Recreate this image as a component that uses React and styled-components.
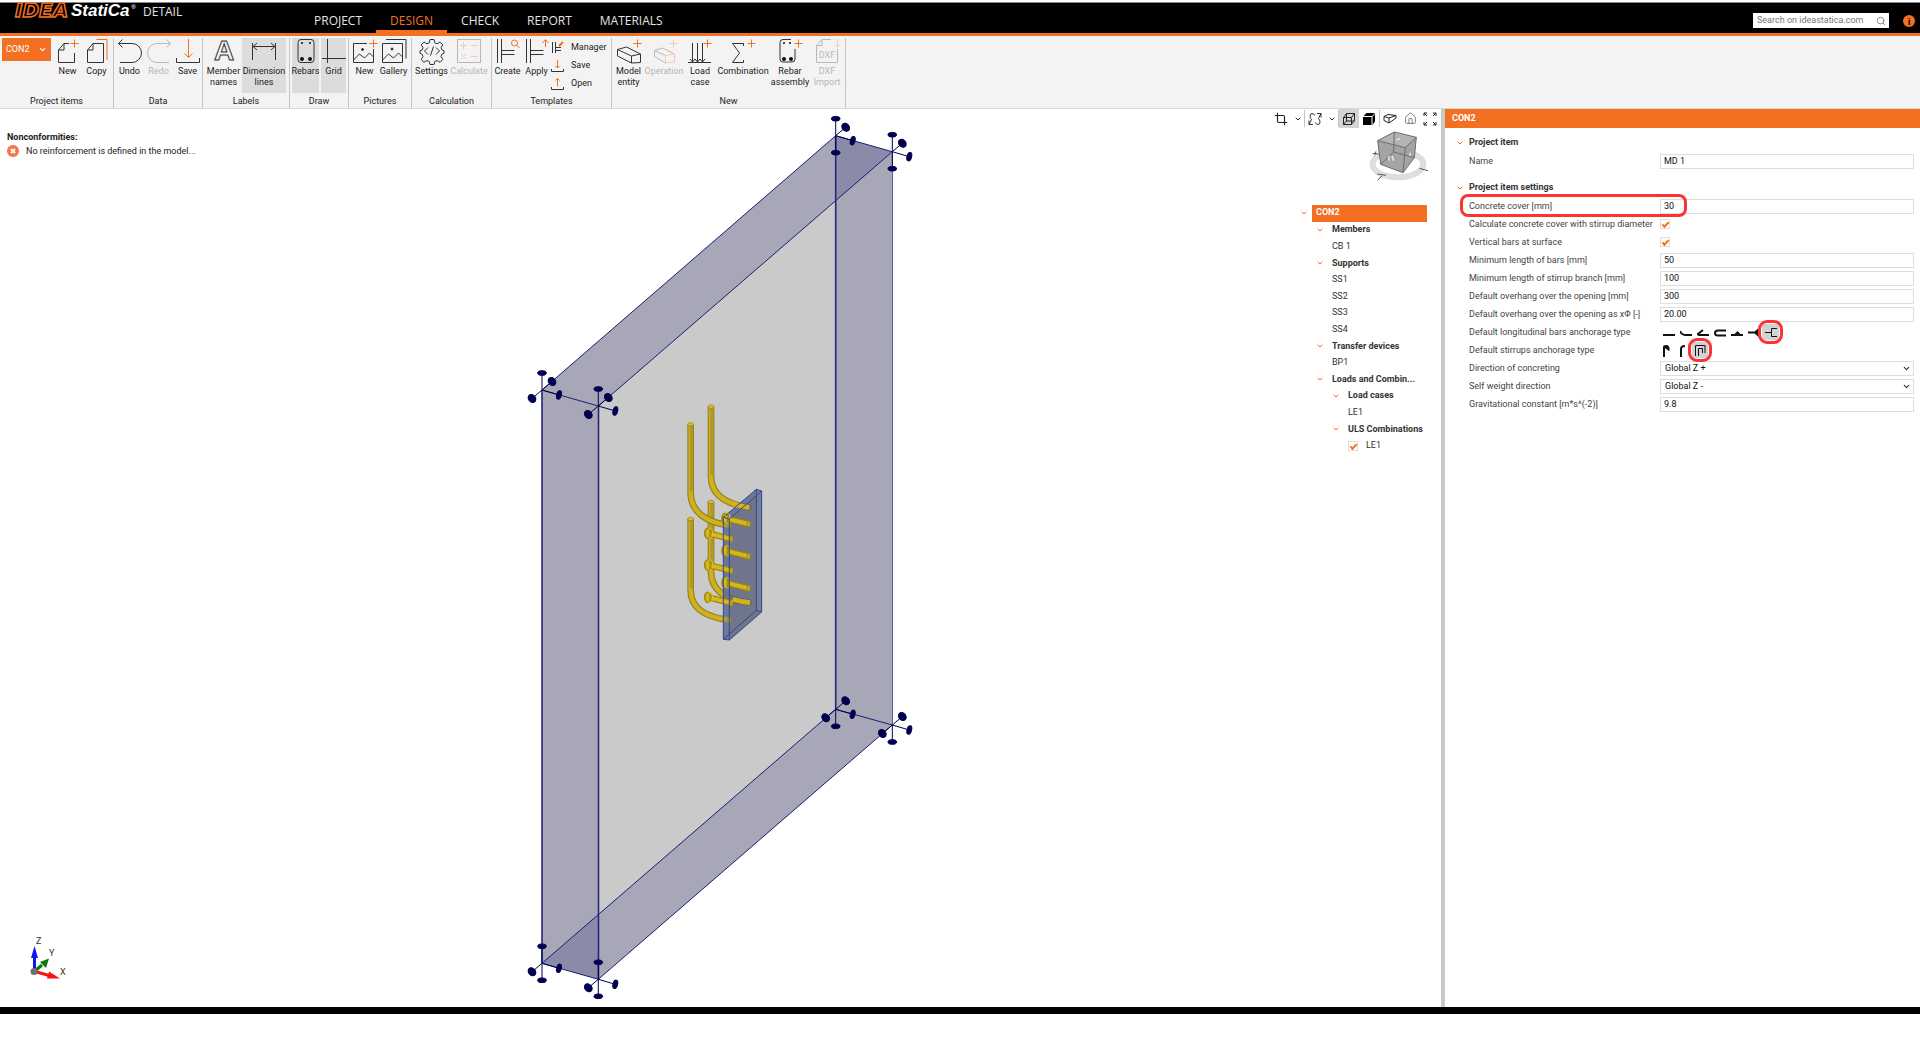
import React from "react";
import styled, { createGlobalStyle } from "styled-components";
import { ChevronDown, Search, Crop, House } from "lucide-react";

const ORANGE = "#f36f21";
const NAVY = "#00004f";

const GlobalStyle = createGlobalStyle`
  *,
  *::after {
    box-sizing: border-box;
  }
  body {
    margin: 0;
    background: #fff;
    color: #222;
    font-family: Roboto, "Open Sans", sans-serif;
    font-size: 9px;
    line-height: 11px;
  }
  button, input, select {
    margin: 0;
    padding: 0;
    border: 0;
    background: none;
    color: inherit;
    font: inherit;
  }
  svg {
    display: block;
    flex: none;
  }
`;

const Page = styled.div`
  display: flex;
  flex-direction: column;
  min-height: 100vh;
  padding: 2px 0 28px;
`;

/* ---------- title bar ---------- */

const TitleBar = styled.header`
  display: flex;
  align-items: stretch;
  height: 34px;
  border-top: 1px solid #8a8a8a;
  border-bottom: 3px solid ${ORANGE};
  background: #000;
  color: #e4e4e4;
  font-family: "Open Sans", "Noto Sans", sans-serif;
`;

const Brand = styled.div`
  display: flex;
  align-items: flex-start;
  width: 300px;
`;

const Product = styled.span`
  padding-top: 1px;
  margin-left: 9px;
  font-size: 12px;
  line-height: 16px;
`;

const Tabs = styled.nav`
  display: flex;
  flex: 1;
`;

const Tab = styled.a`
  padding: 9px 14px 0;
  border-bottom: 3px solid ${(p) => (p.$active ? ORANGE : "transparent")};
  color: ${(p) => (p.$active ? ORANGE : "#e4e4e4")};
  font-size: 12px;
  line-height: 17px;
  text-decoration: none;
`;

const SearchBox = styled.label`
  display: flex;
  align-items: center;
  align-self: flex-start;
  width: 136px;
  height: 15px;
  margin: 10px 14px 0 0;
  padding: 0 3px 0 4px;
  background: #fff;
  color: #777;
  font-family: Roboto, sans-serif;
  input {
    flex: 1;
    min-width: 0;
    outline: 0;
  }
  input::placeholder {
    color: #777;
    opacity: 1;
  }
`;

const InfoButton = styled.button`
  align-self: flex-start;
  width: 12px;
  height: 12px;
  margin: 12px 5px 0 0;
  border-radius: 50%;
  background: ${ORANGE};
  color: #000;
  font-weight: 700;
`;

/* ---------- ribbon ---------- */

const Ribbon = styled.div`
  display: flex;
  height: 73px;
  border-bottom: 1px solid #d8d8d8;
  background: #f3f3f3;
`;

const Group = styled.section`
  display: flex;
  flex-direction: column;
  justify-content: space-between;
  width: ${(p) => p.$width}px;
  margin-top: 2px;
  border-right: 1px solid #c4c4c4;
`;

const GroupTools = styled.div`
  display: flex;
  padding-left: ${(p) => (p.$inset ? 2 : 1)}px;
  gap: ${(p) => p.$gap || 0}px;
`;

const GroupName = styled.div`
  height: 12px;
  text-align: center;
`;

const Tool = styled.button`
  display: flex;
  flex-direction: column;
  align-items: center;
  width: ${(p) => p.$width || 29}px;
  height: 55px;
  padding-top: 1px;
  background: ${(p) => (p.$pressed ? "#dcdcdc" : "transparent")};
  opacity: ${(p) => (p.disabled ? 0.3 : 1)};
  span {
    margin-top: 3px;
    line-height: 11px;
  }
`;

const ProjectButton = styled.button`
  display: flex;
  align-items: center;
  justify-content: space-between;
  width: 49px;
  height: 23px;
  margin-right: 2px;
  padding: 0 4px;
  background: ${ORANGE};
  color: #fff;
`;

const SmallTools = styled.div`
  display: flex;
  flex-direction: column;
`;

const SmallTool = styled.button`
  display: flex;
  align-items: center;
  gap: 7px;
  height: 18px;
`;

const Icon = ({ size = 24, children }) => (
  <svg
    width={size}
    height={size}
    viewBox={`0 0 ${size} ${size}`}
    fill="none"
    stroke="#333"
    overflow="visible"
    aria-hidden="true"
  >
    {children}
  </svg>
);

const Plus = ({ x = 19.5, y = 4.5 }) => (
  <path d={`M${x - 4} ${y}h8M${x} ${y - 4}v8`} stroke={ORANGE} />
);

const icons = {
  newDoc: (
    <Icon>
      <path d="M13 4.5H8L2.5 11v12.5h16V14M8 4.5V11H2.5" />
      <Plus x={18.5} />
    </Icon>
  ),
  copy: (
    <Icon>
      <path d="M11.5.5H22V21" stroke={ORANGE} />
      <path d="M8 4.5h10.500v19h-16V11L8 4.500V11H2.500" />
    </Icon>
  ),
  undo: (
    <Icon>
      <path d="M.5 4.500H14a9.500 9.500 0 0 1 0 19H2M4.500.5l-4 4 4 4" />
    </Icon>
  ),
  redo: (
    <Icon>
      <path d="M23.500 4.500H10a9.500 9.500 0 0 0 0 19h12M19.500.5l4 4-4 4" />
    </Icon>
  ),
  save: (
    <Icon>
      <path d="M12.500 0v18.500M8.500 14.500l4 4 4-4" stroke={ORANGE} />
      <path d="M.5 19v4.500h23V19" />
    </Icon>
  ),
  names: (
    <Icon>
      <text
        x="12"
        y="21"
        textAnchor="middle"
        fontFamily="Liberation Sans, sans-serif"
        fontSize="28"
        fontWeight="700"
        strokeWidth="1"
      >
        A
      </text>
    </Icon>
  ),
  dimension: (
    <Icon>
      <path d="M.5 4v17M23.500 4v17M1 7.500h22M5 4L1 7.500 5 11M19 4l4 3.500-4 3.500" />
    </Icon>
  ),
  rebars: (
    <Icon>
      <rect x="4" y=".5" width="16" height="23" rx="3" />
      <g fill="#111" stroke="none">
        <circle cx="8" cy="4" r="1" />
        <circle cx="16" cy="4" r="1" />
        <circle cx="8" cy="20" r="2" />
        <circle cx="16" cy="20" r="2" />
      </g>
    </Icon>
  ),
  grid: (
    <Icon>
      <path d="M5.500 0v24M0 19.500h24" />
    </Icon>
  ),
  newPicture: (
    <Icon>
      <path d="M14 4.500H.5v19h20V10M.5 21l6-6 5 4 5-5 4 4" />
      <circle cx="9.500" cy="10.500" r="1" fill="#111" />
      <Plus x={20.5} />
    </Icon>
  ),
  gallery: (
    <Icon>
      <path d="M4 .5h20v19M.5 4.500h20v19H.5zM.5 21l6-6 5 4 5-5 4 4" />
      <circle cx="10" cy="10" r="1" fill="#111" />
    </Icon>
  ),
  settings: (
    <Icon>
      <path d="M10 .5h4l.8 3.300 2.200 1 3-1.800 2.800 2.800-1.700 3 .9 2.200 2 .8v2.500l-2.200 1-.8 2.200 1.800 3-2.800 2.800-3-1.800-2.200 1-.8 3h-4l-.8-3-2.200-1-3 1.800-2.800-2.800 1.800-3-1-2.200-2-1v-2.500l2.200-.8.800-2.200-1.800-3L4 3l3 1.800 2.200-1z" />
      <path d="M8 8.500L4.500 12 8 15.500M16 8.500l3.500 3.500-3.500 3.500M13.500 7.500l-3 9" />
    </Icon>
  ),
  calculate: (
    <Icon>
      <rect x=".5" y=".5" width="23" height="23" />
      <path
        d="M3 6.500h7M6.500 3v7M14 6.500h7M4 15l5 5M9 15l-5 5M14 17.500h7M17.500 14v1M17.500 20v1"
        stroke={ORANGE}
      />
    </Icon>
  ),
  create: (
    <Icon>
      <path d="M1.500 0v24M5.500 0v24M5.500 11.500h13M5.500 15.500h13" />
      <path d="M23.500 9l-3-3" stroke={ORANGE} />
      <circle cx="18.500" cy="4" r="3" stroke={ORANGE} />
    </Icon>
  ),
  apply: (
    <Icon>
      <path d="M1.500 0v24M5.500 0v24M5.500 11.500h13M5.500 15.500h13" />
      <path d="M20.500 8V1M17.500 4l3-3.500 3 3.500" stroke={ORANGE} />
    </Icon>
  ),
  manager: (
    <Icon size={13}>
      <path d="M1.500 1v11M4.500 1v11M4.500 6.500H10M4.500 9.500H10" />
      <path d="M8 5l4-4" stroke={ORANGE} strokeWidth="2" />
    </Icon>
  ),
  smallSave: (
    <Icon size={13}>
      <path d="M6.500 1v8M4.500 7l2 2 2-2" stroke={ORANGE} />
      <path d="M.5 10v2.500h12V10" />
    </Icon>
  ),
  smallOpen: (
    <Icon size={13}>
      <path d="M6.500 9.500v-8M4.500 3.500l2-2 2 2" stroke={ORANGE} />
      <path d="M.5 10v2.500h12V10" />
    </Icon>
  ),
  entity: (
    <Icon>
      <path d="M.5 10.500L9.500 8l14 7v8.500l-9 .500-14-7zM.5 10.500l14 6.500 9-2M14.500 17v7" />
      <Plus x={20.5} />
    </Icon>
  ),
  operation: (
    <Icon>
      <path d="M2.500 11.500l8-2.500 12 6M2.500 11.500v6l11 6.500M2.500 11.500l11 5" />
      <path d="M13.500 16.500l9-1.500v8l-9 1z" stroke={ORANGE} />
      <Plus x={21.5} />
    </Icon>
  ),
  loadCase: (
    <Icon>
      <path d="M4.500 4v19M9.500 4v19M14.500 4v19M0 23.500h23M2 20l2.500 3 2.500-3 2.500 3 2.500-3 2.500 3 2.500-3" />
      <Plus x={19.5} />
    </Icon>
  ),
  combination: (
    <Icon>
      <path d="M12.500 7V4.500H1.500l7 9.500-7 9.500h11V21" />
      <Plus x={20.5} />
    </Icon>
  ),
  assembly: (
    <Icon>
      <path d="M13 .5H5a3 3 0 0 0-3 3V20a3 3 0 0 0 3 3h9a3 3 0 0 0 3-3V10" />
      <g fill="#111" stroke="none">
        <circle cx="6" cy="4" r="1" />
        <circle cx="12" cy="4" r="1" />
        <circle cx="6" cy="20" r="2" />
        <circle cx="13" cy="20" r="2" />
      </g>
      <Plus x={20.5} />
    </Icon>
  ),
  dxf: (
    <Icon>
      <path d="M16 .5H7l-5.500 6v17h21V10M7 .5v6H1.500" />
      <path d="M22.500 0v8M20 5.500L22.500 8 25 5.500" stroke={ORANGE} />
      <text x="12" y="19" textAnchor="middle" fontSize="9" fill="#333" stroke="none">
        DXF
      </text>
    </Icon>
  ),
};

const ribbonGroups = [
  {
    name: "Project items",
    width: 114,
    inset: true,
    project: true,
    tools: [
      { label: "New", icon: "newDoc" },
      { label: "Copy", icon: "copy" },
    ],
  },
  {
    name: "Data",
    width: 89,
    tools: [
      { label: "Undo", icon: "undo" },
      { label: "Redo", icon: "redo", disabled: true },
      { label: "Save", icon: "save" },
    ],
  },
  {
    name: "Labels",
    width: 87,
    inset: true,
    tools: [
      { label: "Member names", icon: "names", width: 37 },
      { label: "Dimension lines", icon: "dimension", width: 44, pressed: true },
    ],
  },
  {
    name: "Draw",
    width: 59,
    gap: 2,
    inset: true,
    tools: [
      { label: "Rebars", icon: "rebars", width: 27, pressed: true },
      { label: "Grid", icon: "grid", width: 25, pressed: true },
    ],
  },
  {
    name: "Pictures",
    width: 63,
    tools: [
      { label: "New", icon: "newPicture" },
      { label: "Gallery", icon: "gallery" },
    ],
  },
  {
    name: "Calculation",
    width: 80,
    tools: [
      { label: "Settings", icon: "settings", width: 37 },
      { label: "Calculate", icon: "calculate", width: 38, disabled: true },
    ],
  },
  {
    name: "Templates",
    width: 120,
    small: true,
    tools: [
      { label: "Create", icon: "create" },
      { label: "Apply", icon: "apply" },
    ],
  },
  {
    name: "New",
    width: 234,
    tools: [
      { label: "Model entity", icon: "entity", width: 31 },
      { label: "Operation", icon: "operation", width: 40, disabled: true },
      { label: "Load case", icon: "loadCase", width: 32 },
      { label: "Combination", icon: "combination", width: 54 },
      { label: "Rebar assembly", icon: "assembly", width: 40 },
      { label: "DXF Import", icon: "dxf", width: 34, disabled: true },
    ],
  },
];

/* ---------- viewport ---------- */

const Main = styled.main`
  display: flex;
  flex: 1;
`;

const Viewport = styled.div`
  display: grid;
  flex: 1;
  grid-template-columns: 1fr 401px 1fr;
  background: #fff;
`;

const LeftColumn = styled.div`
  display: flex;
  flex-direction: column;
  justify-content: space-between;
  padding: 22px 0 24px 7px;
`;

const MessageTitle = styled.div`
  font-weight: 700;
  line-height: 13px;
`;

const Message = styled.div`
  display: flex;
  align-items: center;
  gap: 7px;
  height: 14px;
`;

const AxesBox = styled.div`
  padding-left: 13px;
`;

const RightColumn = styled.div`
  display: flex;
  flex-direction: column;
  align-items: flex-end;
  padding-right: 1px;
`;

const ViewTools = styled.div`
  display: flex;
  height: 19px;
`;

const ViewTool = styled.button`
  display: flex;
  align-items: center;
  justify-content: center;
  width: ${(p) => (p.$narrow ? 13 : 20)}px;
  background: ${(p) => (p.$pressed ? "#d3d3d3" : "transparent")};
`;

const Separator = styled.i`
  width: 1px;
  margin: 1px 0;
  background: #c4c4c4;
`;

const CubeBox = styled.div`
  padding: 2px 10px 23px 0;
`;

const Tree = styled.ul`
  display: grid;
  grid-auto-rows: 1fr;
  width: 127px;
  height: 249px;
  margin: 0 13px 0 0;
  padding: 0;
  list-style: none;
`;

const TreeRow = styled.li`
  display: flex;
  align-items: center;
  gap: ${(p) => (p.$level ? 8 : 4)}px;
  padding-left: ${(p) => p.$level * 16}px;
  color: #333;
  font-weight: ${(p) => (p.$bold ? 700 : 400)};
  white-space: nowrap;
`;

const TreeToggle = styled.button`
  display: flex;
  width: 8px;
  color: ${ORANGE};
`;

const TreeLabel = styled.span`
  flex: 1;
  ${(p) =>
    p.$selected &&
    `
    align-self: stretch;
    padding: 2px 4px;
    background: ${ORANGE};
    color: #fff;
  `}
`;

const TreeCheck = styled.label`
  display: flex;
  align-items: center;
  gap: 8px;
  padding-left: 16px;
`;

const CheckBox = styled.input`
  appearance: none;
  display: grid;
  place-items: center;
  width: 10px;
  height: 10px;
  border: 1px solid #dcdcdc;
  background: #fff;
  &:checked::after {
    content: "";
    width: 7px;
    height: 4px;
    border: solid ${ORANGE};
    border-width: 0 0 2px 2px;
    transform: rotate(-45deg);
  }
`;

const treeRows = [
  { label: "CON2", level: 0, bold: true, selected: true },
  { label: "Members", level: 1, bold: true },
  { label: "CB 1", level: 1 },
  { label: "Supports", level: 1, bold: true },
  { label: "SS1", level: 1 },
  { label: "SS2", level: 1 },
  { label: "SS3", level: 1 },
  { label: "SS4", level: 1 },
  { label: "Transfer devices", level: 1, bold: true },
  { label: "BP1", level: 1 },
  { label: "Loads and Combin...", level: 1, bold: true },
  { label: "Load cases", level: 2, bold: true },
  { label: "LE1", level: 2 },
  { label: "ULS Combinations", level: 2, bold: true },
  { label: "LE1", level: 2, check: true },
];

/* u/d: vertical discs, f/b: discs on the diagonal axis */
const supports = [
  { x: 835.7, y: 135.7, discs: "udb" },
  { x: 892.3, y: 151.7, discs: "udb" },
  { x: 542, y: 390, discs: "ubf" },
  { x: 598.3, y: 406, discs: "ubf" },
  { x: 835.7, y: 709.3, discs: "dbf" },
  { x: 892.3, y: 725, discs: "dbf" },
  { x: 542, y: 963.3, discs: "udf" },
  { x: 598.3, y: 979.3, discs: "udf" },
];

const Support = ({ x, y, discs }) => {
  const has = (d) => discs.includes(d);
  return (
    <g transform={`translate(${x} ${y})`} fill={NAVY} stroke={NAVY}>
      <path d="M0 0L17 5" />
      <ellipse cx="17" cy="5" rx="2.300" ry="4.300" transform="rotate(15 17 5)" />
      {has("u") && <path d="M0 0V-17" />}
      {has("u") && <ellipse cy="-17" rx="4.300" ry="2.300" />}
      {has("d") && <path d="M0 0V17" />}
      {has("d") && <ellipse cy="17" rx="4.300" ry="2.300" />}
      {has("b") && <path d="M0 0L10-8.500" />}
      {has("b") && <ellipse cx="10" cy="-8.500" rx="3.500" ry="4.300" transform="rotate(-40 10 -8.500)" />}
      {has("f") && <path d="M0 0L-10 8.500" />}
      {has("f") && <ellipse cx="-10" cy="8.500" rx="3.500" ry="4.300" transform="rotate(-40 -10 8.500)" />}
    </g>
  );
};

const Bar = ({ x, y, bend, end }) => {
  const curve = `V${bend}C${x} ${bend + 60} ${x + 50} ${end - 8} ${x + 116} ${end}`;
  return (
    <g fill="none">
      <path d={`M${x} ${y}${curve}`} stroke="#8f7c1c" strokeWidth="20" />
      <path d={`M${x} ${y}${curve}`} stroke="#b09824" strokeWidth="16" />
      <path d={`M${x} ${bend - 4}${curve}`} stroke="#d2b21c" strokeWidth="11" />
      <path d={`M${x - 4} ${y}V${bend}`} stroke="#c4aa34" strokeWidth="4" />
      <ellipse cx={x} cy={y} rx="9" ry="5" fill="#e0c020" stroke="#8f7c1c" strokeWidth="2" />
      <ellipse cx={x + 116} cy={end} rx="5" ry="9" fill="#cba814" stroke="#8f7c1c" strokeWidth="2" />
    </g>
  );
};

const Stud = ({ x, y }) => (
  <g fill="none">
    <path d={`M${x} ${y}l69 17`} stroke="#98841c" strokeWidth="19" />
    <path d={`M${x} ${y}l69 17`} stroke="#d8b818" strokeWidth="12" />
    <ellipse cx={x + 69} cy={y + 17} rx="5" ry="9" fill="#cba814" stroke="#8f7c1c" strokeWidth="2" />
    <ellipse cx={x - 2} cy={y} rx="9" ry="15" fill="#ccae18" stroke="#a08a18" strokeWidth="5" />
    <ellipse cx={x + 5} cy={y} rx="8" ry="15" stroke="#e2c21c" strokeWidth="3" />
  </g>
);

const Scene = () => (
  <svg width="401" height="898" viewBox="520 109 401 898" role="img" aria-label="Wall model">
    <path d="M542 390L835.700 135.700 892.300 151.700V725L598.300 979.300 542 963.300z" fill="#cacaca" />
    <g fill="#000062" fillOpacity=".173">
      <path d="M542 390L598.300 406V979.300L542 963.300z" />
      <path d="M835.700 135.700L892.300 151.700V725L835.700 709.300z" />
      <path d="M542 390L835.700 135.700 892.300 151.700 598.300 406z" />
      <path d="M542 963.300L835.700 709.300 892.300 725 598.300 979.300z" />
    </g>
    <g stroke="#1c1c74" fill="none">
      <path d="M542 390L835.700 135.700 892.300 151.700 598.300 406zM542 963.300L835.700 709.300 892.300 725 598.300 979.300z" />
      <path d="M542 390V963M598.500 406V979M835.700 136V709" stroke="#26267c" strokeWidth="1.600" />
      <path d="M892.500 152V725" stroke="#5c5ca6" />
    </g>
    <g transform="translate(660 390) scale(.33333)">
      <Bar x={153} y={50} bend={258} end={352} />
      <Bar x={153} y={336} bend={545} end={638} />
      <path d="M190 382L289 298 305 303V666L208 750 190 748z" fill="#5a627c" fillOpacity=".82" />
      <Bar x={92} y={103} bend={308} end={406} />
      <Bar x={92} y={387} bend={600} end={690} />
      <path d="M190 382L208 387V750L190 748zM190 382L289 298 305 303 208 387z" fill="#6a7cb0" fillOpacity=".4" />
      <path d="M289 298L305 303V666L289 661z" fill="#8090b4" fillOpacity=".35" />
      <Stud x={197} y={385} />
      <Stud x={197} y={482} />
      <Stud x={197} y={578} />
      <Stud x={145} y={430} />
      <Stud x={145} y={525} />
      <Stud x={145} y={622} />
      <path d="M218 340q20 9 50 12M218 628q22 7 52 10" stroke="#d2b21c" strokeWidth="14" fill="none" />
      <g stroke="#32478c" strokeWidth="3" fill="none">
        <path d="M190 382L289 298 305 303 208 387zM190 382V748L208 750V387M305 303V666L208 750M289 298V661L190 748M289 661L305 666" />
      </g>
    </g>
    {supports.map((s) => (
      <Support key={`${s.x}-${s.y}`} {...s} />
    ))}
  </svg>
);

const Axes = () => (
  <svg width="50" height="50" viewBox="20 933 50 50" fontSize="9" fill="#333">
    <path d="M34.500 971V956" stroke="#1414f0" strokeWidth="3" />
    <path d="M34.500 946L31 958h7z" fill="#1414f0" />
    <path d="M36 970l6-5" stroke="#0a7a0a" strokeWidth="3" />
    <path d="M49 958.500l-9 3.500 6 6z" fill="#0a7a0a" />
    <path d="M35 971.500l14 4" stroke="#f41414" strokeWidth="3" />
    <path d="M60 978.500l-11-7-2 7z" fill="#f41414" />
    <circle cx="34" cy="971.500" r="3.500" fill="#707070" />
    <text x="36" y="944">Z</text>
    <text x="49" y="956">Y</text>
    <text x="60" y="975">X</text>
  </svg>
);

const ViewCube = () => (
  <svg width="63" height="52" viewBox="325 72 189 156" fill="none" role="img" aria-label="View cube">
    <ellipse cx="418" cy="175" rx="76" ry="39" stroke="#dedede" strokeWidth="18" />
    <path d="M357 104L407 78 473 94 467 155 433 200 366 175z" fill="#a4a4a4" />
    <path d="M357 104L407 78 473 94 440 125z" fill="#b4b4b4" />
    <path
      d="M357 104L407 78 473 94 467 155 433 200 366 175zM357 104l83 21 33-31M440 125l-7 75M407 78l-2 60-39 37M405 138l62 17"
      stroke="#6c6c6c"
      strokeWidth="3"
    />
    <path d="M414 102l10-4M391 150v14M400 150l5 14M454 140v10" stroke="#eee" strokeWidth="4" />
    <path d="M342 142l18 2M352 136l-4 12M482 187l26 7M356 204l26 4M370 209l-13 14" stroke="#555" strokeWidth="3" />
  </svg>
);

/* ---------- properties panel ---------- */

const Splitter = styled.div`
  width: 4px;
  background: #c9c9c9;
`;

const Panel = styled.aside`
  width: 475px;
`;

const PanelHeader = styled.h2`
  height: 19px;
  margin: 0 0 5px;
  padding-left: 7px;
  background: ${ORANGE};
  color: #fff;
  font-size: 9px;
  line-height: 18px;
`;

const Section = styled.section`
  margin-bottom: 8px;
  padding: 0 6px 0 11px;
`;

const SectionTitle = styled.h3`
  display: flex;
  align-items: center;
  gap: 5px;
  height: 19px;
  margin: 0;
  color: #333;
  font-size: 9px;
  svg {
    color: ${ORANGE};
  }
`;

const Row = styled.div`
  position: relative;
  display: grid;
  grid-template-columns: 191px 1fr;
  align-items: center;
  height: 18px;
  margin-left: 13px;
  color: #444;
  ${(p) =>
    p.$marked &&
    `
    &::after {
      content: "";
      position: absolute;
      top: -3px;
      left: -9px;
      width: 227px;
      height: 23px;
      border: 3px solid #fb3333;
      border-radius: 8px;
      pointer-events: none;
    }
  `}
`;

const TextField = styled.input`
  width: 100%;
  height: 15px;
  padding: 0 3px;
  border: 1px solid #dedede;
  color: #111;
`;

const SelectBox = styled.div`
  display: grid;
  align-items: center;
  height: 15px;
  border: 1px solid #dedede;
  select,
  svg {
    grid-area: 1 / 1;
  }
  select {
    appearance: none;
    width: 100%;
    padding: 0 4px;
    color: #111;
  }
  svg {
    justify-self: end;
    margin-right: 2px;
    pointer-events: none;
  }
`;

const Choices = styled.div`
  display: flex;
`;

const Choice = styled.button`
  position: relative;
  display: grid;
  place-items: center;
  width: ${(p) => p.$width}px;
  height: 16px;
  background: ${(p) => (p.$selected ? "#d2d2d2" : "transparent")};
  ${(p) =>
    p.$selected &&
    `
    &::after {
      content: "";
      position: absolute;
      inset: -4px;
      z-index: 1;
      border: 3px solid #fb3333;
      border-radius: 9px;
    }
  `}
`;

const barAnchors = [
  ["Straight", "M0 9h12"],
  ["Bend", "M0 5q1 3.500 5 4h7"],
  ["Hook", "M6 4l-5 4q0 1 2 1h9"],
  ["Loop", "M12 4.500H4q-3 0-3 2.500t3 2.500h8"],
  ["Welded bar", "M0 9h12M5 8l1.500-1.500L8 8z"],
  ["Perfect bond", "M0 6.500h10M11 3v7L7 6.500z"],
  ["Continuous", "M0 6.500h6M12 2.500H6.500v8H12"],
];

const stirrupAnchors = [
  ["Hook", "M2 13V3q0-1 2-1 3 0 2.500 3.500L3 3"],
  ["Bend", "M3 13V5q0-3 4-3"],
  ["Closed", "M1.500 12V1.500h9.500V9M4.500 12V4.500H8.500V9"],
];

const AnchorChoices = ({ items, selected, width }) => (
  <Choices>
    {items.map(([name, d]) => (
      <Choice key={name} type="button" aria-label={name} $width={width} $selected={name === selected}>
        <svg width="12" height="13" viewBox="0 0 12 13" fill="none" stroke="#111" strokeWidth={name === selected ? 1 : 2}>
          <path d={d} />
        </svg>
      </Choice>
    ))}
  </Choices>
);

const Field = ({ id, label, value, marked }) => (
  <Row $marked={marked}>
    <label htmlFor={id}>{label}</label>
    <TextField id={id} defaultValue={value} />
  </Row>
);

const CheckField = ({ id, label }) => (
  <Row>
    <label htmlFor={id}>{label}</label>
    <CheckBox id={id} type="checkbox" defaultChecked />
  </Row>
);

const SelectField = ({ id, label, value }) => (
  <Row>
    <label htmlFor={id}>{label}</label>
    <SelectBox>
      <select id={id} defaultValue={value}>
        <option>{value}</option>
      </select>
      <ChevronDown size={9} strokeWidth={3} color="#333" />
    </SelectBox>
  </Row>
);

const BottomBar = styled.div`
  height: 7px;
  background: #000;
`;

const App = () => (
  <>
    <GlobalStyle />
    <Page>
      <TitleBar>
        <Brand>
          <svg width="134" height="22" viewBox="0 0 134 22" overflow="visible" fontStyle="italic" fontWeight="700">
            <text x="15" y="14" fontFamily="DejaVu Sans, sans-serif" fontSize="20" stroke={ORANGE} strokeWidth="1.500" fill="#000">
              IDEA
            </text>
            <text x="71" y="13" fontFamily="Liberation Sans, sans-serif" fontSize="17" fill="#fff">
              StatiCa
            </text>
            <text x="131" y="6" fontSize="6" fontWeight="400" fill="#fff">
              ®
            </text>
          </svg>
          <Product>DETAIL</Product>
        </Brand>
        <Tabs>
          {["PROJECT", "DESIGN", "CHECK", "REPORT", "MATERIALS"].map((t) => (
            <Tab key={t} href="#" $active={t === "DESIGN"}>
              {t}
            </Tab>
          ))}
        </Tabs>
        <SearchBox>
          <input type="search" aria-label="Search" placeholder="Search on ideastatica.com" />
          <Search size={10} />
        </SearchBox>
        <InfoButton aria-label="Info">i</InfoButton>
      </TitleBar>

      <Ribbon>
        {ribbonGroups.map((g, i) => (
          <Group key={i} $width={g.width}>
            <GroupTools $gap={g.gap} $inset={g.inset}>
              {g.project && (
                <ProjectButton>
                  CON2
                  <ChevronDown size={9} strokeWidth={3} />
                </ProjectButton>
              )}
              {g.tools.map((t) => (
                <Tool key={t.label} $width={t.width} $pressed={t.pressed} disabled={t.disabled}>
                  {icons[t.icon]}
                  <span>{t.label}</span>
                </Tool>
              ))}
              {g.small && (
                <SmallTools>
                  <SmallTool>{icons.manager}Manager</SmallTool>
                  <SmallTool>{icons.smallSave}Save</SmallTool>
                  <SmallTool>{icons.smallOpen}Open</SmallTool>
                </SmallTools>
              )}
            </GroupTools>
            <GroupName>{g.name}</GroupName>
          </Group>
        ))}
      </Ribbon>

      <Main>
        <Viewport>
          <LeftColumn>
            <div>
              <MessageTitle>Nonconformities:</MessageTitle>
              <Message>
                <svg width="12" height="12" viewBox="0 0 12 12">
                  <circle cx="6" cy="6" r="6" fill="#f4764a" />
                  <path d="M4 4l4 4M8 4L4 8" stroke="#fff" strokeWidth="2" />
                </svg>
                No reinforcement is defined in the model...
              </Message>
            </div>
            <AxesBox>
              <Axes />
            </AxesBox>
          </LeftColumn>
          <Scene />
          <RightColumn>
            <ViewTools>
              <ViewTool aria-label="Crop">
                <Crop size={14} strokeWidth={2} />
              </ViewTool>
              <ViewTool aria-label="Crop options" $narrow>
                <ChevronDown size={8} strokeWidth={3} />
              </ViewTool>
              <Separator />
              <ViewTool aria-label="Rotate">
                <svg width="14" height="14" viewBox="0 0 14 14" fill="none" stroke="#333">
                  <path d="M6.500 3.500Q6 1.500 4 1.500T2 4q0 2 1.500 3.500L1 12.500M1 8.500v4h4M7.500 10.500q.500 2 2.500 2t2-2.500q0-2-1.500-3.500L13 1.500M13 5.500v-4H9" />
                </svg>
              </ViewTool>
              <ViewTool aria-label="Rotate options" $narrow>
                <ChevronDown size={8} strokeWidth={3} />
              </ViewTool>
              <Separator />
              <ViewTool aria-label="Transparent" $pressed>
                <svg width="14" height="14" viewBox="0 0 14 14" fill="none" stroke="#222">
                  <path d="M1.500 5.500h8v7h-8zM1.500 5.500l3-4h8l-3 4M12.500 1.500v7l-3 4M4.500 1.500v7.500h8M4.500 9l-3 3.500" />
                </svg>
              </ViewTool>
              <ViewTool aria-label="Solid">
                <svg width="14" height="14" viewBox="0 0 14 14" fill="#000">
                  <path d="M1 5h8.500v8H1zM1.500 4l3-3H13l-3 3zM10.500 4.700L13 2v7.500L10.500 13z" />
                </svg>
              </ViewTool>
              <Separator />
              <ViewTool aria-label="Clip">
                <svg width="14" height="14" viewBox="0 0 14 14" fill="none" stroke="#222">
                  <path d="M1 4.500L5 2.500 13 3.500 6 6zM1 4.500v4L6 11V6M13 3.500V6L6 11" />
                </svg>
              </ViewTool>
              <ViewTool aria-label="Home">
                <House size={13} strokeWidth={1} />
              </ViewTool>
              <ViewTool aria-label="Fit">
                <svg width="14" height="14" viewBox="0 0 14 14" fill="none" stroke="#222">
                  <path d="M1 4V1h3M1 1l3 3M10 1h3v3M13 1l-3 3M1 10v3h3M1 13l3-3M13 10v3h-3M13 13l-3-3" />
                </svg>
              </ViewTool>
            </ViewTools>
            <CubeBox>
              <ViewCube />
            </CubeBox>
            <Tree>
              {treeRows.map((r, i) => (
                <TreeRow key={i} $level={r.level} $bold={r.bold}>
                  {r.check ? (
                    <TreeCheck>
                      <CheckBox type="checkbox" defaultChecked />
                      {r.label}
                    </TreeCheck>
                  ) : (
                    <>
                      <TreeToggle as={r.bold ? "button" : "span"} aria-label={r.bold ? `Toggle ${r.label}` : undefined}>
                        {r.bold && <ChevronDown size={8} strokeWidth={3} />}
                      </TreeToggle>
                      <TreeLabel $selected={r.selected}>{r.label}</TreeLabel>
                    </>
                  )}
                </TreeRow>
              ))}
            </Tree>
          </RightColumn>
        </Viewport>
        <Splitter />
        <Panel>
          <PanelHeader>CON2</PanelHeader>
          <Section>
            <SectionTitle>
              <ChevronDown size={8} strokeWidth={3} />
              Project item
            </SectionTitle>
            <Field id="name" label="Name" value="MD 1" />
          </Section>
          <Section>
            <SectionTitle>
              <ChevronDown size={8} strokeWidth={3} />
              Project item settings
            </SectionTitle>
            <Field id="cover" label="Concrete cover [mm]" value="30" marked />
            <CheckField id="stirrup-cover" label="Calculate concrete cover with stirrup diameter" />
            <CheckField id="vertical" label="Vertical bars at surface" />
            <Field id="min-bar" label="Minimum length of bars [mm]" value="50" />
            <Field id="min-branch" label="Minimum length of stirrup branch [mm]" value="100" />
            <Field id="overhang" label="Default overhang over the opening [mm]" value="300" />
            <Field id="overhang-phi" label="Default overhang over the opening as xΦ [-]" value="20.00" />
            <Row>
              <span>Default longitudinal bars anchorage type</span>
              <AnchorChoices items={barAnchors} selected="Continuous" width={17} />
            </Row>
            <Row>
              <span>Default stirrups anchorage type</span>
              <AnchorChoices items={stirrupAnchors} selected="Closed" width={16} />
            </Row>
            <SelectField id="concreting" label="Direction of concreting" value="Global Z +" />
            <SelectField id="self-weight" label="Self weight direction" value="Global Z -" />
            <Field id="gravity" label="Gravitational constant [m*s^(-2)]" value="9.8" />
          </Section>
        </Panel>
      </Main>
      <BottomBar />
    </Page>
  </>
);

export default App;
